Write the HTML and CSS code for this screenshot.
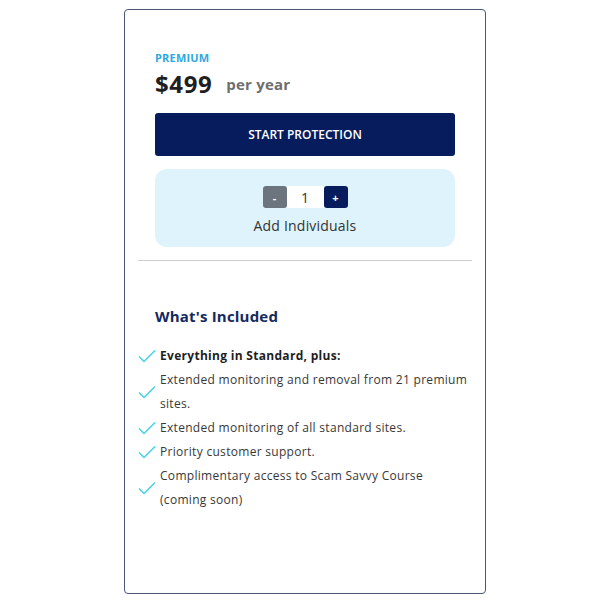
FILE: index.html
```html
<!DOCTYPE html>
<html>
<head>
<meta charset="utf-8">
<link rel="stylesheet" href="styles.css">
</head>
<body>
<div class="card">
  <div class="top">
    <div class="tier">PREMIUM</div>
    <div class="price"><span class="amount">$499</span><span class="period">per year</span></div>
    <button class="cta">START PROTECTION</button>
    <div class="addbox">
      <div class="stepper">
        <span class="btn minus">-</span>
        <span class="qty">1</span>
        <span class="btn plus">+</span>
      </div>
      <div class="addlabel">Add Individuals</div>
    </div>
  </div>
  <div class="divider"></div>
  <div class="bottom">
    <h3 class="inc">What's Included</h3>
    <ul class="features">
      <li><svg class="chk" viewBox="0 0 18 14"><path d="M1 7.5 L6 12.5 L17 1.5"/></svg><span class="strong">Everything in Standard, plus:</span></li>
      <li><svg class="chk" viewBox="0 0 18 14"><path d="M1 7.5 L6 12.5 L17 1.5"/></svg><span>Extended monitoring and removal from 21 premium sites.</span></li>
      <li><svg class="chk" viewBox="0 0 18 14"><path d="M1 7.5 L6 12.5 L17 1.5"/></svg><span>Extended monitoring of all standard sites.</span></li>
      <li><svg class="chk" viewBox="0 0 18 14"><path d="M1 7.5 L6 12.5 L17 1.5"/></svg><span>Priority customer support.</span></li>
      <li><svg class="chk" viewBox="0 0 18 14"><path d="M1 7.5 L6 12.5 L17 1.5"/></svg><span>Complimentary access to Scam Savvy Course (coming soon)</span></li>
    </ul>
  </div>
</div>
</body>
</html>
```
FILE: styles.css
```css
* { box-sizing: border-box; }
body {
  margin: 0;
  background: #fff;
  font-family: "Open Sans", "Liberation Sans", sans-serif;
}
.card {
  margin: 9px 0 0 124px;
  width: 362px;
  height: 585px;
  border: 1.5px solid #4b5873;
  border-radius: 4px;
  padding: 40px 13px 0 13px;
}
.top { padding: 0 17px; }
.tier {
  color: #2ea9e0;
  font-size: 11px;
  font-weight: 700;
  line-height: 16px;
  letter-spacing: 0.2px;
}
.price {
  display: flex;
  align-items: center;
  gap: 14px;
  margin-top: 1px;
  height: 32px;
}
.amount {
  font-size: 24px;
  font-weight: 700;
  color: #1f1f1f;
  letter-spacing: 0.6px;
}
.period {
  font-size: 15px;
  font-weight: 700;
  color: #6e6e6e;
  letter-spacing: 0.2px;
  padding-top: 1px;
}
.cta {
  display: block;
  width: 100%;
  height: 43px;
  margin-top: 14px;
  border: none;
  border-radius: 3px;
  background: #061c5c;
  color: #fff;
  font-family: inherit;
  font-size: 12px;
  font-weight: 600;
}
.addbox {
  margin-top: 13px;
  height: 78px;
  background: #def3fb;
  border-radius: 12px;
  display: flex;
  flex-direction: column;
  align-items: center;
  padding-top: 17px;
}
.stepper {
  display: flex;
  align-items: center;
  height: 22px;
}
.btn {
  width: 24px;
  height: 22px;
  border-radius: 3px;
  color: #fff;
  font-size: 11px;
  font-weight: 700;
  display: flex;
  align-items: center;
  justify-content: center;
}
.minus { background: #6c757d; }
.plus { background: #061c5c; }
.qty {
  width: 37px;
  height: 22px;
  background: #fff;
  color: #333;
  font-size: 14px;
  display: flex;
  align-items: center;
  justify-content: center;
}
.addlabel {
  margin-top: 8px;
  font-size: 14px;
  color: #333;
  line-height: 20px;
  letter-spacing: 0.2px;
}
.divider {
  margin-top: 13px;
  height: 1px;
  background: #cfcfcf;
}
.inc {
  margin: 45px 0 0 17px;
  font-size: 15px;
  font-weight: 700;
  color: #15295f;
  line-height: 20px;
  letter-spacing: 0.2px;
}
.features {
  list-style: none;
  margin: 18px 0 0 0;
  padding: 0;
}
.features li {
  display: flex;
  align-items: center;
  gap: 4px;
  font-size: 12px;
  line-height: 24px;
  color: #383838;
  letter-spacing: 0.3px;
}
.features li span { flex: 1; padding-right: 2px; }
.strong { font-weight: 700; color: #1f1f1f; }
.chk {
  width: 18px;
  height: 14px;
  flex: none;
  fill: none;
  stroke: #45d3e6;
  stroke-width: 1.5;
}
```
